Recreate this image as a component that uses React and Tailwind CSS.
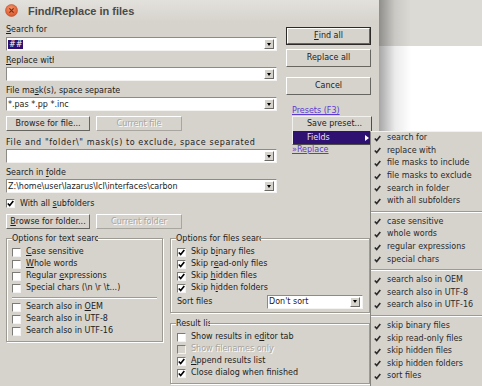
import React from "react";

const CheckMark = ({ className = "" }) => (
  <svg width="7" height="7" viewBox="0 0 7 7" className={className}>
    <path d="M0.8 3.4 L2.7 5.6 L6.3 0.9" fill="none" stroke="currentColor" strokeWidth="1.6" />
  </svg>
);

export default function App() {
  return (
    <div className="relative w-[482px] h-[386px] overflow-hidden flex bg-white font-['DejaVu_Sans',sans-serif] text-[8px] text-[#1c1c1c]">
      {/* DIALOG */}
      <div className="w-[379px] shrink-0 bg-[#d6d3cd] flex flex-col">
        {/* TITLE BAR */}
        <div className="h-[22px] flex items-center bg-gradient-to-b from-[#e3e1dc] to-[#d6d3cd]">
          <CloseBtn />
          <span className="ml-[10px] font-['Liberation_Sans',sans-serif] font-bold text-[11px] text-[#4a4a48]">
            Find/Replace in files
          </span>
        </div>

        <div className="flex pl-[6px]">
          {/* LEFT COLUMN */}
          <div className="w-[271px] flex flex-col">
            <Label className="mt-[2px]"><u className="underline">S</u>earch for</Label>
            <Combo className="mt-[2px]">
              <span className="bg-[#2d1070] text-white px-[1px]">##</span>
            </Combo>

            <Label className="mt-[4px] w-[48px]"><u className="underline">R</u>eplace with</Label>
            <Combo className="mt-[1px]" />

            <Label className="mt-[4px] w-[114px]">File ma<u className="underline">s</u>k(s), space separated</Label>
            <Combo className="mt-[1px]">*.pas *.pp *.inc</Combo>

            <div className="mt-[5px] flex gap-[6px]">
              <Btn className="w-[84px] h-[15px]">Browse for file...</Btn>
              <Btn disabled className="w-[86px] h-[15px]">Current file</Btn>
            </div>

            <Label className="mt-[6px] tracking-[0.6px]">File and "folder\" mask(s) to exclude, space separated</Label>
            <Combo className="mt-[1px]" />

            <Label className="mt-[4px] w-[60px]">Search in <u className="underline">f</u>older</Label>
            <Combo className="mt-[1px]">Z:\home\user\lazarus\lcl\interfaces\carbon</Combo>

            <div className="mt-[5px] h-[11px] flex items-center">
              <Box checked />
              <span className="ml-[5px]">With all <u className="underline">s</u>ubfolders</span>
            </div>

            <div className="mt-[5px] flex gap-[6px]">
              <Btn className="w-[84px] h-[15px]"><u className="underline">B</u>rowse for folder...</Btn>
              <Btn disabled className="w-[86px] h-[15px]">Current folder</Btn>
            </div>
          </div>

          {/* RIGHT COLUMN */}
          <div className="ml-[9px] w-[85px] flex flex-col">
            <Btn def className="mt-[5px] h-[18px]"><u className="underline">F</u>ind all</Btn>
            <Btn className="mt-[4px] h-[18px]">Replace all</Btn>
            <Btn className="mt-[10px] h-[18px]">Cancel</Btn>
            <span className="mt-[10px] ml-[6px] leading-[11px] text-[#5b3bd2] underline">Presets (F3)</span>
            <span className="mt-[28px] ml-[6px] leading-[11px] text-[#5b3bd2] underline">»Replace</span>
          </div>
        </div>

        {/* GROUPS */}
        <div className="flex pl-[6px] mt-[9px] items-start">
          <Group title="Options for text search" titleW="w-[86px]" className="w-[157px] pl-[5px] pt-[7px] pb-[4px]">
            <Row><u className="underline">C</u>ase sensitive</Row>
            <Row><u className="underline">W</u>hole words</Row>
            <Row>Regular <u className="underline">e</u>xpressions</Row>
            <Row>Special chars (\n \r \t...)</Row>
            <div className="h-[7px] flex items-center pr-[5px]">
              <div className="w-full border-t border-t-[#9d9a94] border-b border-b-white" />
            </div>
            <Row>Search also in <u className="underline">O</u>EM</Row>
            <Row>Search also in UTF-8</Row>
            <Row>Search also in UTF-16</Row>
          </Group>

          <div className="ml-[7px] w-[200px] flex flex-col">
            <Group title="Options for files search" titleW="w-[85px]" className="pl-[6px] pt-[7px] pb-[4px]">
              <Row checked>Skip b<u className="underline">i</u>nary files</Row>
              <Row checked>Skip r<u className="underline">e</u>ad-only files</Row>
              <Row checked>Skip <u className="underline">h</u>idden files</Row>
              <Row checked>Skip h<u className="underline">i</u>dden folders</Row>
              <div className="mt-[1px] h-[13px] flex items-center">
                <span className="w-[90px]">Sort files</span>
                <Combo className="w-[96px] h-[13px]">Don't sort</Combo>
              </div>
            </Group>

            <Group title="Result list" titleW="w-[34px]" className="mt-[10px] pl-[6px] pt-[7px] pb-[4px]">
              <Row>Show results in e<u className="underline">d</u>itor tab</Row>
              <Row disabled>Show filenames only</Row>
              <Row checked><u className="underline">A</u>ppend results list</Row>
              <Row checked>Close dialog when finished</Row>
            </Group>
          </div>
        </div>
      </div>

      {/* WINDOW BEHIND */}
      <div className="relative flex-1 flex flex-col">
        <div className="h-[46px] bg-[#dcdad5]" />
        <div className="flex-1 bg-white" />
        <div className="absolute inset-y-0 left-0 w-[32px] bg-gradient-to-r from-black/35 via-black/8 to-transparent" />
      </div>

      {/* PRESETS POPUP */}
      <div className="absolute left-[292px] top-[116px] w-[80px] h-[29px] bg-[#d6d3cd] border border-t-[#f2f1ee] border-l-[#f2f1ee] border-b-[#4e4d4a] border-r-[#4e4d4a] flex flex-col">
        <div className="h-[14px] pl-[14px] flex items-center">Save preset...</div>
        <div className="h-[13px] pl-[14px] flex items-center bg-[#2e1170] text-[#e4e2f4]">
          <span className="flex-1">Fields</span>
          <div className="mr-[2px] w-0 h-0 border-t-[3.5px] border-b-[3.5px] border-l-[4px] border-t-transparent border-b-transparent border-l-white" />
        </div>
      </div>

      {/* FIELDS SUBMENU */}
      <div className="absolute left-[370px] top-[131px] w-[120px] h-[260px] bg-[#d6d3cd] border-l border-l-[#86847f] border-t border-t-[#f2f1ee] flex flex-col text-[#2a2a2a]">
        <MenuItem>search for</MenuItem>
        <MenuItem>replace with</MenuItem>
        <MenuItem>file masks to include</MenuItem>
        <MenuItem>file masks to exclude</MenuItem>
        <MenuItem>search in folder</MenuItem>
        <MenuItem>with all subfolders</MenuItem>
        <MenuSep />
        <MenuItem>case sensitive</MenuItem>
        <MenuItem>whole words</MenuItem>
        <MenuItem>regular expressions</MenuItem>
        <MenuItem>special chars</MenuItem>
        <MenuSep />
        <MenuItem>search also in OEM</MenuItem>
        <MenuItem>search also in UTF-8</MenuItem>
        <MenuItem>search also in UTF-16</MenuItem>
        <MenuSep />
        <MenuItem>skip binary files</MenuItem>
        <MenuItem>skip read-only files</MenuItem>
        <MenuItem>skip hidden files</MenuItem>
        <MenuItem>skip hidden folders</MenuItem>
        <MenuItem>sort files</MenuItem>
      </div>
    </div>
  );
}

/* ================= UI HELPERS ================= */
const CloseBtn = () => (
  <svg width="13" height="13" viewBox="0 0 13 13" className="ml-[5px] -mt-[1px]">
    <defs>
      <radialGradient id="cg" cx="45%" cy="35%" r="65%">
        <stop offset="0%" stopColor="#f6956a" />
        <stop offset="100%" stopColor="#d9542a" />
      </radialGradient>
    </defs>
    <circle cx="6.5" cy="6.5" r="6" fill="url(#cg)" stroke="#b9502c" strokeWidth="0.6" />
    <path d="M4.4 4.4 L8.6 8.6 M8.6 4.4 L4.4 8.6" stroke="#7a2e14" strokeWidth="1.3" />
  </svg>
);

const Label = ({ children, className = "" }) => (
  <div className={`h-[11px] leading-[11px] whitespace-nowrap overflow-hidden ${className}`}>{children}</div>
);

const DropBtn = () => (
  <div className="mr-[2px] w-[10px] h-[10px] shrink-0 flex items-center justify-center bg-[#d6d3cd] border border-t-white border-l-white border-b-[#6b6a66] border-r-[#6b6a66]">
    <div className="w-0 h-0 border-l-[2.5px] border-r-[2.5px] border-t-[3px] border-l-transparent border-r-transparent border-t-black" />
  </div>
);

const Combo = ({ children, className = "" }) => (
  <div className={`flex items-center h-[14px] bg-white border border-t-[#8d8b86] border-l-[#8d8b86] border-b-[#f4f3f1] border-r-[#f4f3f1] ${className}`}>
    <div className="flex-1 pl-[1px] overflow-hidden whitespace-nowrap leading-[11px]">{children}</div>
    <DropBtn />
  </div>
);

const Btn = ({ children, className = "", disabled, def }) => {
  const inner = (
    <div
      className={`h-full flex items-center justify-center whitespace-nowrap bg-[#d6d3cd] border ${
        disabled
          ? "border-t-white border-l-white border-b-[#a9a6a0] border-r-[#a9a6a0] text-[#a8a59f] [text-shadow:1px_1px_0_#fff]"
          : "border-t-white border-l-white border-b-[#66655f] border-r-[#66655f]"
      }`}
    >
      {children}
    </div>
  );
  if (def) return <div className={`border border-[#2b2a28] ${className}`}>{inner}</div>;
  return <div className={className}>{inner}</div>;
};

const Box = ({ checked, disabled }) => (
  <div
    className={`w-[9px] h-[9px] shrink-0 flex items-center justify-center border border-t-[#7c7a75] border-l-[#7c7a75] border-b-[#f4f3f1] border-r-[#f4f3f1] ${
      disabled ? "bg-[#d6d3cd]" : "bg-white"
    }`}
  >
    {checked && <CheckMark className="text-black" />}
  </div>
);

const Row = ({ children, checked, disabled }) => (
  <div className="h-[12px] flex items-center whitespace-nowrap">
    <Box checked={checked} disabled={disabled} />
    <span className={`ml-[5px] ${disabled ? "text-[#a8a59f] [text-shadow:1px_1px_0_#fff]" : ""}`}>{children}</span>
  </div>
);

const Group = ({ title, titleW, className = "", children }) => (
  <div className={`relative border border-[#9d9a94] shadow-[inset_1px_1px_0_#fff,1px_1px_0_#fff] ${className}`}>
    <div className={`absolute -top-[6px] left-[5px] ${titleW} bg-[#d6d3cd] leading-[11px] overflow-hidden whitespace-nowrap`}>
      {title}
    </div>
    {children}
  </div>
);

const MenuItem = ({ children }) => (
  <div className="h-[12.6px] flex items-center whitespace-nowrap">
    <CheckMark className="ml-[3px] text-[#2a2a2a]" />
    <span className="ml-[6px]">{children}</span>
  </div>
);

const MenuSep = () => (
  <div className="h-[8px] flex items-center">
    <div className="w-full border-t border-t-[#9d9a94] border-b border-b-white" />
  </div>
);
